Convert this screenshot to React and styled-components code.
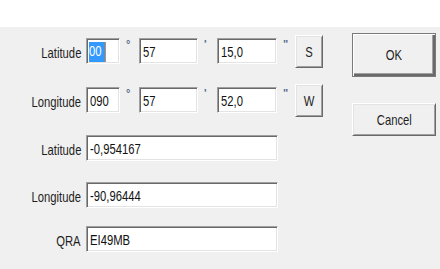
import React from "react";
import styled, { createGlobalStyle } from "styled-components";

const GlobalStyle = createGlobalStyle`
  body {
    margin: 0;
    background: #ffffff;
    font-family: "Liberation Sans", Arial, sans-serif;
  }
`;

const Window = styled.div`
  width: 440px;
  height: 269px;
  display: flex;
  flex-direction: column;
  overflow: hidden;
`;

const TopBand = styled.div`
  height: 27px;
  background: #ffffff;
  flex: none;
`;

const Panel = styled.div`
  flex: 1;
  background: #f0f0f0;
  display: flex;
  gap: 29px;
`;

const Form = styled.div`
  display: flex;
  flex-direction: column;
`;

const Row = styled.div`
  display: flex;
  align-items: center;
  height: 26px;
  margin-top: ${(p) => p.$top}px;
`;

// the dialog text is drawn narrow and tall, like a stretched system font
const Squash = styled.span`
  display: inline-block;
  white-space: nowrap;
  font-size: 15px;
  line-height: 18px;
  transform: scaleX(0.75);
  transform-origin: ${(p) => p.$origin || "left"} center;
`;

const Label = styled.span`
  width: 81px;
  margin-right: 5px;
  padding-top: 4px;
  text-align: right;
  color: #1e1e1e;
`;

const Field = styled.div`
  box-sizing: border-box;
  width: ${(p) => p.$width}px;
  height: 26px;
  background: #ffffff;
  border: 1px solid;
  border-color: #a0a0a0 #ffffff #ffffff #a0a0a0;
  box-shadow: inset 1px 1px 0 #696969, inset -1px -1px 0 #e3e3e3;
  padding: 2px 2px 0 3px;
  display: flex;
  align-items: center;
  color: #111;
  overflow: hidden;
`;

const Selected = styled.span`
  display: inline-block;
  background: #3399ff;
  color: #ffffff;
  width: 16px;
  height: 20px;
  margin-left: -1px;
  border-right: 1px solid #d58a3c;
`;

const Unit = styled.span`
  width: ${(p) => p.$width}px;
  align-self: flex-start;
  padding-left: 6px;
  box-sizing: border-box;
  font-size: 11px;
  font-weight: bold;
  line-height: 12px;
  color: #5a6b8a;
`;

const Button = styled.button`
  box-sizing: border-box;
  width: ${(p) => p.$width}px;
  height: ${(p) => p.$height}px;
  background: #f0f0f0;
  font-family: "Liberation Sans", Arial, sans-serif;
  color: #1e1e1e;
  padding: 0;
  display: flex;
  align-items: center;
  justify-content: center;
  border: 1px solid;
  border-color: ${(p) =>
    p.$default ? "#7a7a7a" : "#ffffff #696969 #696969 #ffffff"};
  box-shadow: ${(p) =>
    p.$default
      ? "inset 1px 1px 0 #ffffff, inset -2px -2px 0 #696969, inset -3px -3px 0 #a0a0a0"
      : "inset 1px 1px 0 #e3e3e3, inset -1px -1px 0 #a0a0a0"};
`;

const Hemi = styled(Button)`
  margin-top: 1px;
`;

const Actions = styled.div`
  display: flex;
  flex-direction: column;
  padding-top: 6px;
  gap: 26px;
`;

const Text = ({ children, origin }) => <Squash $origin={origin}>{children}</Squash>;

export default function App() {
  return (
    <>
      <GlobalStyle />
      <Window>
        <TopBand />
        <Panel>
          <Form>
            <Row $top={11}>
              <Label>
                <Text origin="right">Latitude</Text>
              </Label>
              <Field $width={34}>
                <Selected>
                  <Text>00</Text>
                </Selected>
              </Field>
              <Unit $width={19}>°</Unit>
              <Field $width={59}>
                <Text>57</Text>
              </Field>
              <Unit $width={19}>'</Unit>
              <Field $width={60}>
                <Text>15,0</Text>
              </Field>
              <Unit $width={18}>"</Unit>
              <Hemi $width={28} $height={33}>
                <Text origin="center">S</Text>
              </Hemi>
            </Row>
            <Row $top={23}>
              <Label>
                <Text origin="right">Longitude</Text>
              </Label>
              <Field $width={34}>
                <Text>090</Text>
              </Field>
              <Unit $width={19}>°</Unit>
              <Field $width={59}>
                <Text>57</Text>
              </Field>
              <Unit $width={19}>'</Unit>
              <Field $width={60}>
                <Text>52,0</Text>
              </Field>
              <Unit $width={18}>"</Unit>
              <Hemi $width={28} $height={33}>
                <Text origin="center">W</Text>
              </Hemi>
            </Row>
            <Row $top={22}>
              <Label>
                <Text origin="right">Latitude</Text>
              </Label>
              <Field $width={192}>
                <Text>-0,954167</Text>
              </Field>
            </Row>
            <Row $top={21}>
              <Label>
                <Text origin="right">Longitude</Text>
              </Label>
              <Field $width={192}>
                <Text>-90,96444</Text>
              </Field>
            </Row>
            <Row $top={18}>
              <Label>
                <Text origin="right">QRA</Text>
              </Label>
              <Field $width={192}>
                <Text>EI49MB</Text>
              </Field>
            </Row>
          </Form>
          <Actions>
            <Button $default $width={84} $height={44}>
              <Text origin="center">OK</Text>
            </Button>
            <Button $width={84} $height={33}>
              <Text origin="center">Cancel</Text>
            </Button>
          </Actions>
        </Panel>
      </Window>
    </>
  );
}
